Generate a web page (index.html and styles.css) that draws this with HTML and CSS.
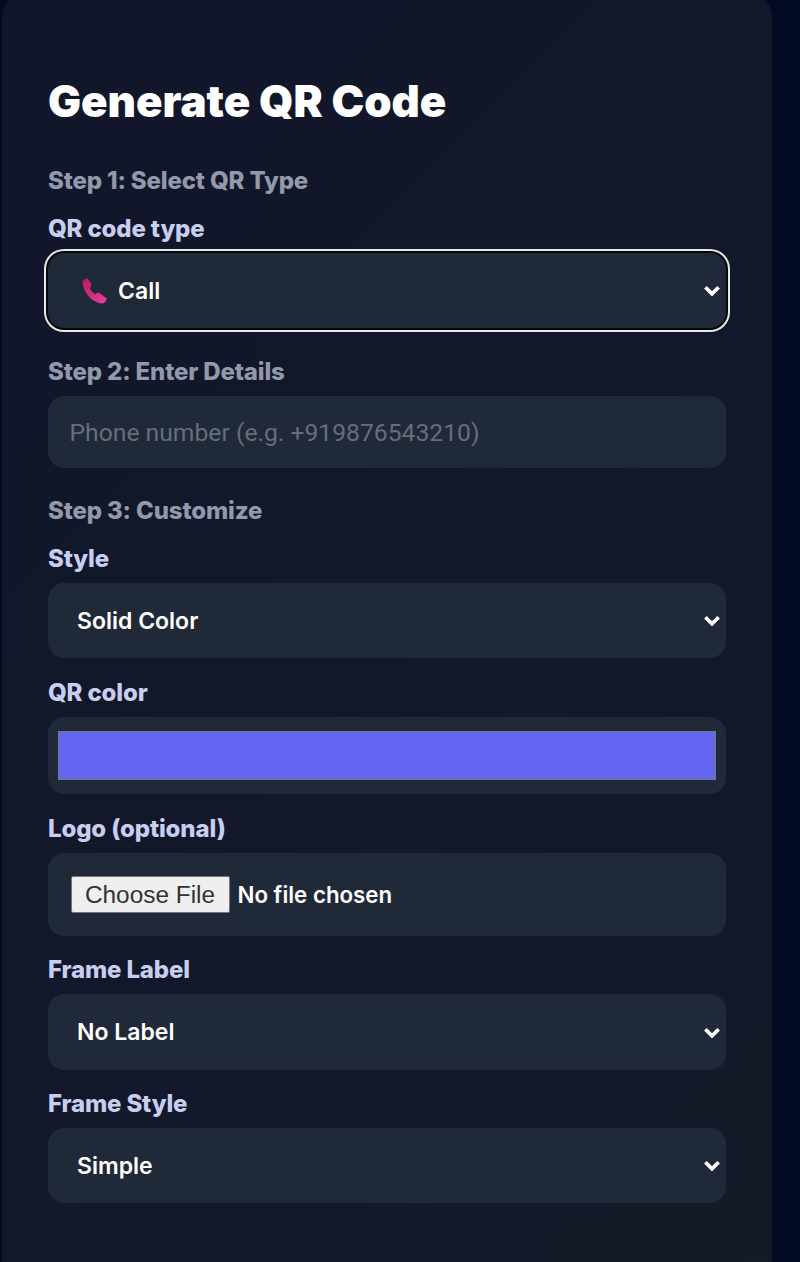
FILE: index.html
```html
<!DOCTYPE html>
<html lang="en">
<head>
    <meta charset="UTF-8">
    <meta name="viewport" content="width=device-width, initial-scale=1.0">
    <title>Generate QR Code</title>
    <link rel="stylesheet" href="styles.css">
</head>
<body>
    <main class="card">
        <h1>Generate QR Code</h1>

        <h2 class="step">Step 1: Select QR Type</h2>
        <div class="label">QR code type</div>
        <div class="select select-focus">
            <svg class="phone" viewBox="0 0 26 26">
                <defs>
                    <linearGradient id="phoneFill" x1="0" y1="0" x2="1" y2="1">
                        <stop offset="0" stop-color="#b81a5c"/>
                        <stop offset="1" stop-color="#ec3fa0"/>
                    </linearGradient>
                </defs>
                <path fill="url(#phoneFill)" d="M0.500 3.500 C1 1.500 3 0 6 0 L9.500 5.500 C10 7.500 9.500 9 8 10 C9 12.500 11 15 13.500 16.500 C15 15 16.500 14.500 18 15 L25.500 20.500 C26 23 24 25.500 21 26 C11 25.500 1 15 0.500 3.500 Z"/>
            </svg>
            <span>Call</span>
            <svg class="chevron" viewBox="0 0 16 10"><path d="M2 2 L8 8 L14 2"/></svg>
        </div>

        <h2 class="step step-2">Step 2: Enter Details</h2>
        <input class="text-input" type="text" placeholder="Phone number (e.g. +919876543210)">

        <h2 class="step step-3">Step 3: Customize</h2>
        <div class="label">Style</div>
        <div class="select">
            <span>Solid Color</span>
            <svg class="chevron" viewBox="0 0 16 10"><path d="M2 2 L8 8 L14 2"/></svg>
        </div>

        <div class="label label-gap-wide">QR color</div>
        <div class="color-box">
            <input class="color-input" type="color" value="#6366f1">
        </div>

        <div class="label label-gap-wide">Logo (optional)</div>
        <div class="file-box">
            <input class="file-input" type="file">
        </div>

        <div class="label label-gap">Frame Label</div>
        <div class="select select-tall">
            <span>No Label</span>
            <svg class="chevron" viewBox="0 0 16 10"><path d="M2 2 L8 8 L14 2"/></svg>
        </div>

        <div class="label label-gap">Frame Style</div>
        <div class="select">
            <span>Simple</span>
            <svg class="chevron" viewBox="0 0 16 10"><path d="M2 2 L8 8 L14 2"/></svg>
        </div>
    </main>
</body>
</html>
```

FILE: styles.css
```css
* {
    box-sizing: border-box;
}

html, body {
    height: 100%;
}

body {
    margin: 0;
    overflow: hidden;
    background: #030a24;
    font-family: Inter, "Liberation Sans", sans-serif;
    color: #fff;
}

.card {
    width: 770px;
    height: 1320px;
    margin: -10px 0 0 2px;
    padding: 86px 46px 0 46px;
    border-radius: 28px;
    background: linear-gradient(135deg, #11162a 0%, #12172a 50%, #151a28 100%);
}

h1 {
    margin: 0 0 37px;
    font-size: 43.8px;
    line-height: 52px;
    font-weight: 900;
}

.step {
    margin: 0 0 16px;
    font-size: 24px;
    line-height: 32px;
    font-weight: 800;
    letter-spacing: -0.15px;
    color: #9299aa;
}

.step-2 {
    margin-top: 28px;
    margin-bottom: 8px;
}

.step-3 {
    margin-top: 27px;
    margin-bottom: 16px;
}

.label {
    margin-bottom: 8px;
    font-size: 24px;
    line-height: 32px;
    font-weight: 800;
    letter-spacing: -0.15px;
    color: #c7cef0;
}

.label-gap {
    margin-top: 18px;
}

.label-gap-wide {
    margin-top: 19px;
}

.select {
    display: flex;
    align-items: center;
    height: 75px;
    padding: 0 5px 0 29px;
    border-radius: 16px;
    background: #1f2937;
    font-size: 23px;
    font-weight: 600;
}

.select-tall {
    height: 76px;
}

.select-focus {
    padding-left: 34px;
    box-shadow: 0 0 0 2px #06080f, 0 0 0 4px #e9e9e4;
}

.chevron {
    width: 18px;
    height: 11px;
    margin-left: auto;
    fill: none;
    stroke: #fff;
    stroke-width: 3.4;
}

.phone {
    width: 25px;
    height: 26px;
    margin-right: 11px;
}

.text-input {
    display: block;
    width: 100%;
    height: 72px;
    padding: 0 21.5px;
    border: 0;
    border-radius: 16px;
    background: #1f2937;
    font-family: Roboto, "Liberation Sans", sans-serif;
    font-size: 24.7px;
    color: #fff;
}

.text-input::placeholder {
    color: #676d79;
    opacity: 1;
}

.color-box {
    height: 77px;
    padding: 14px 10px;
    border-radius: 16px;
    background: #1f2937;
}

.color-input {
    display: block;
    width: 100%;
    height: 49px;
    padding: 0;
    border: 0;
    background: none;
    appearance: none;
}

.color-input::-webkit-color-swatch-wrapper {
    padding: 0;
}

.color-input::-webkit-color-swatch {
    border: 1px solid #77797c;
    border-radius: 0;
}

.file-box {
    display: flex;
    align-items: center;
    height: 83px;
    padding: 0 22.5px;
    border-radius: 16px;
    background: #1f2937;
}

.file-input {
    width: 100%;
    font-family: Inter, "Liberation Sans", sans-serif;
    font-size: 22.3px;
    font-weight: 600;
    color: #fff;
}

.file-input::file-selector-button {
    width: 159px;
    height: 37px;
    margin-right: 8px;
    padding: 0;
    border: 1px solid #767676;
    border-radius: 2px;
    background: #efefef;
    font-family: "Liberation Sans", sans-serif;
    font-size: 24.4px;
    font-weight: 400;
    color: #333;
}
```
